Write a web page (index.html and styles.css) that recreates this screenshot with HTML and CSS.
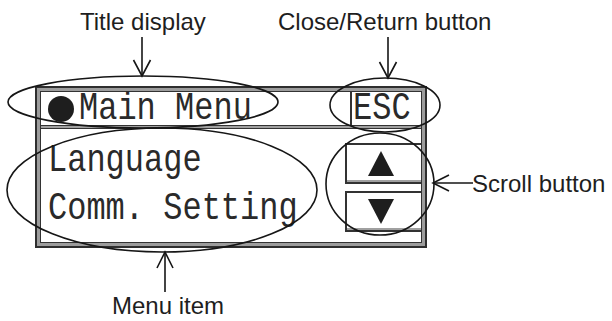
FILE: index.html
```html
<!DOCTYPE html>
<html lang="en">
<head>
<meta charset="utf-8">
<title>Main Menu screen</title>
<link rel="stylesheet" href="styles.css">
</head>
<body>
<div class="canvas">
  <div class="panel">
    <div class="titlebar">
      <div class="title"><span class="dot"></span><span class="lcd">Main Menu</span></div>
      <div class="esc"><span class="lcd">ESC</span></div>
    </div>
    <div class="divider"></div>
    <div class="body">
      <div class="items">
        <div class="item"><span class="lcd">Language</span></div>
        <div class="item"><span class="lcd">Comm. Setting</span></div>
      </div>
      <div class="scroll">
        <div class="sbtn"><svg width="26" height="25" viewBox="0 0 26 25"><polygon points="13,0 26,25 0,25" fill="#1e1e1e"/></svg></div>
        <div class="sbtn"><svg width="26" height="25" viewBox="0 0 26 25"><polygon points="0,0 26,0 13,25" fill="#1e1e1e"/></svg></div>
      </div>
    </div>
  </div>

  <svg class="overlay" width="612" height="321" viewBox="0 0 612 321">
    <g fill="none" stroke="#161616" stroke-width="1.6">
      <ellipse cx="143" cy="102" rx="135" ry="26"/>
      <ellipse cx="385" cy="105" rx="55" ry="27"/>
      <ellipse cx="162" cy="190" rx="155" ry="62"/>
      <ellipse cx="380" cy="184" rx="54" ry="51"/>
      <line x1="142" y1="37" x2="142" y2="76"/>
      <polyline points="133.5,60 142,76 150.5,60"/>
      <line x1="388" y1="37" x2="388" y2="78"/>
      <polyline points="379.5,62 388,78 396.5,62"/>
      <line x1="165" y1="252" x2="165" y2="292"/>
      <polyline points="157,268 165,252 173,268"/>
      <line x1="433" y1="183" x2="473" y2="183"/>
      <polyline points="449,175 433,183 449,191"/>
    </g>
  </svg>

  <div class="label label-title">Title display</div>
  <div class="label label-close">Close/Return button</div>
  <div class="label label-menu">Menu item</div>
  <div class="label label-scroll">Scroll button</div>
</div>
</body>
</html>
```

FILE: styles.css
```css
html, body {
  margin: 0;
  padding: 0;
  background: #ffffff;
}

.canvas {
  position: relative;
  width: 612px;
  height: 321px;
  overflow: hidden;
  background: #ffffff;
  padding: 86px 0 0 35px;
  box-sizing: border-box;
}

.panel {
  width: 392px;
  height: 162px;
  box-sizing: border-box;
  border: 2px solid #2e2e2e;
  box-shadow: inset 0 0 0 3px #9c9c9c, inset 0 0 0 4px #333333;
  padding: 4px;
  display: flex;
  flex-direction: column;
  background: #ffffff;
}

.lcd {
  font-family: "Liberation Mono", "DejaVu Sans Mono", monospace;
  font-size: 32px;
  line-height: 32px;
  color: #2a2a2a;
  display: inline-block;
  transform: scaleY(1.22);
  white-space: pre;
}

.titlebar {
  height: 33px;
  display: grid;
  grid-template-columns: 1fr 71px;
}

.title {
  display: flex;
  align-items: center;
  gap: 5px;
  padding-left: 7px;
}

.dot {
  width: 26px;
  height: 26px;
  border-radius: 50%;
  background: #1e1e1e;
  flex: none;
}

.esc {
  border-left: 2px solid #333333;
  display: flex;
  align-items: center;
  padding-left: 1px;
}

.divider {
  height: 2px;
  border-top: 1px solid #333333;
  border-bottom: 1px solid #333333;
  background: #a0a0a0;
}

.body {
  flex: 1;
  display: grid;
  grid-template-columns: 1fr 76px;
}

.items {
  padding: 8px 0 0 7px;
  display: flex;
  flex-direction: column;
}

.item {
  height: 48px;
  display: flex;
  align-items: center;
}

.scroll {
  padding-top: 14px;
  display: flex;
  flex-direction: column;
  gap: 7px;
}

.sbtn {
  height: 41px;
  box-sizing: border-box;
  border: 2px solid #333333;
  border-right: none;
  box-shadow: inset 0 -2px 0 #a0a0a0;
  display: flex;
  align-items: center;
  justify-content: center;
  padding-right: 6px;
}

.sbtn svg {
  display: block;
}

.overlay {
  position: absolute;
  left: 0;
  top: 0;
  pointer-events: none;
}

.label {
  position: absolute;
  font-family: "Liberation Sans", Arial, sans-serif;
  font-size: 24px;
  line-height: 20px;
  color: #1e1e1e;
  white-space: nowrap;
}

.label-title {
  left: 80px;
  top: 12px;
}

.label-close {
  left: 278px;
  top: 12px;
}

.label-menu {
  left: 112px;
  top: 296px;
}

.label-scroll {
  left: 472px;
  top: 174px;
}
```
